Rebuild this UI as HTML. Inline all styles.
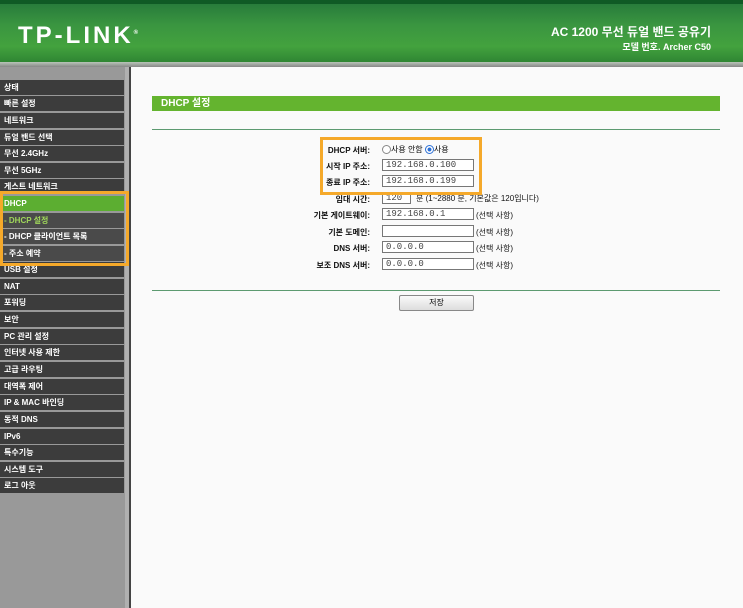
<!DOCTYPE html><html><head><meta charset="utf-8"><style>
*{margin:0;padding:0;box-sizing:border-box}
body{width:743px;height:608px;overflow:hidden;background:#fafafa;font-family:"Liberation Sans","Noto Sans CJK KR",sans-serif;position:relative}
.hdr{position:absolute;left:0;top:0;width:743px;height:62px;background:linear-gradient(180deg,#24773a 0%,#3a9540 40%,#43a23e 75%,#2f8633 100%)}
.hdr:after{content:"";position:absolute;left:0;top:0;width:743px;height:4px;background:#0f5a25}
.logo{position:absolute;left:18px;top:22px;color:#fff;font-size:24px;font-weight:bold;letter-spacing:3px}
.t1{position:absolute;right:32px;top:23px;color:#fff;font-size:12px;font-weight:bold}
.t2{position:absolute;right:32px;top:40px;color:#fff;font-size:9px;font-weight:bold}
.gl{position:absolute;left:0;top:62px;width:743px;height:5px;background:linear-gradient(#b8c4b8,#888)}
.side{position:absolute;left:0;top:67px;width:129px;height:541px;background:#999}
.side .strip{position:absolute;right:0;top:0;width:4px;height:541px;background:#b0b0b0}
.vl{position:absolute;left:129px;top:67px;width:2px;height:541px;background:#444}
.it{position:absolute;left:0;width:124px;height:15px;background:#3c3c3c;color:#fff;font-size:8px;font-weight:bold;line-height:15px;padding-left:4px}
.it.g{background:#5cae31}
.it.s{background:#4a4a4a}
.ob{position:absolute;border:3px solid #f5a92a}
.bar{position:absolute;left:152px;top:96px;width:568px;height:15px;background:#64b42f;color:#fff;font-size:10px;font-weight:bold;line-height:15px;padding-left:9px}
.ln{position:absolute;left:152px;width:568px;height:1px;background:#5c9a70}
.lb{position:absolute;right:373px;font-size:8px;font-weight:bold;color:#111;text-align:right}
.in{position:absolute;left:382px;width:92px;height:12px;border:1px solid #777;background:#fff;font-family:"Liberation Mono",monospace;font-size:9px;color:#444;line-height:10px;padding-left:3px}
.nt{position:absolute;left:476px;font-size:8px;color:#111}
.btn{position:absolute;left:399px;top:295px;width:75px;height:16px;border:1px solid #888;background:linear-gradient(#fafafa,#ddd);font-size:8px;text-align:center;line-height:14px;border-radius:2px}
</style></head><body>
<div class="hdr"><div class="logo">TP-LINK<sup style="font-size:6px;letter-spacing:0">®</sup></div><div class="t1">AC 1200 무선 듀얼 밴드 공유기</div><div class="t2">모델 번호. Archer C50</div></div>
<div class="gl"></div>
<div class="side"><div class="strip"></div></div>
<div class="vl"></div>
<div class="it" style="top:80px">상태</div>
<div class="it" style="top:96px">빠른 설정</div>
<div class="it" style="top:113px">네트워크</div>
<div class="it" style="top:130px">듀얼 밴드 선택</div>
<div class="it" style="top:146px">무선 2.4GHz</div>
<div class="it" style="top:163px">무선 5GHz</div>
<div class="it" style="top:179px">게스트 네트워크</div>
<div class="it g" style="top:196px">DHCP</div>
<div class="it s" style="top:213px;color:#9fd65a">- DHCP 설정</div>
<div class="it s" style="top:229px">- DHCP 클라이언트 목록</div>
<div class="it s" style="top:246px">- 주소 예약</div>
<div class="it" style="top:262px">USB 설정</div>
<div class="it" style="top:279px">NAT</div>
<div class="it" style="top:295px">포워딩</div>
<div class="it" style="top:312px">보안</div>
<div class="it" style="top:329px">PC 관리 설정</div>
<div class="it" style="top:345px">인터넷 사용 제한</div>
<div class="it" style="top:362px">고급 라우팅</div>
<div class="it" style="top:379px">대역폭 제어</div>
<div class="it" style="top:395px">IP &amp; MAC 바인딩</div>
<div class="it" style="top:412px">동적 DNS</div>
<div class="it" style="top:429px">IPv6</div>
<div class="it" style="top:445px">특수기능</div>
<div class="it" style="top:462px">시스템 도구</div>
<div class="it" style="top:478px">로그 아웃</div>
<div class="ob" style="left:0;top:191px;width:129px;height:75px"></div>
<div class="bar">DHCP 설정</div>
<div class="ln" style="top:129px"></div>
<div class="lb" style="top:145px">DHCP 서버:</div>
<div style="position:absolute;left:382px;top:144px;font-size:8px"><span style="display:inline-block;width:9px;height:9px;border:1px solid #888;border-radius:50%;vertical-align:-2px;background:#fff"></span>사용 안함 <span style="display:inline-block;width:9px;height:9px;border:1px solid #2a6fd6;border-radius:50%;vertical-align:-2px;background:radial-gradient(#2a6fd6 35%,#fff 45%)"></span>사용</div>
<div class="lb" style="top:161px">시작 IP 주소:</div><div class="in" style="top:159px">192.168.0.100</div>
<div class="lb" style="top:177px">종료 IP 주소:</div><div class="in" style="top:175px">192.168.0.199</div>
<div class="lb" style="top:194px">임대 시간:</div><div class="in" style="top:192px;width:29px">120</div><div class="nt" style="top:193px;left:416px">분 (1~2880 분, 기본값은 120입니다)</div>
<div class="lb" style="top:210px">기본 게이트웨이:</div><div class="in" style="top:208px">192.168.0.1</div><div class="nt" style="top:210px">(선택 사항)</div>
<div class="lb" style="top:227px">기본 도메인:</div><div class="in" style="top:225px"></div><div class="nt" style="top:227px">(선택 사항)</div>
<div class="lb" style="top:243px">DNS 서버:</div><div class="in" style="top:241px">0.0.0.0</div><div class="nt" style="top:243px">(선택 사항)</div>
<div class="lb" style="top:260px">보조 DNS 서버:</div><div class="in" style="top:258px">0.0.0.0</div><div class="nt" style="top:260px">(선택 사항)</div>
<div class="ob" style="left:320px;top:137px;width:162px;height:58px"></div>
<div class="ln" style="top:290px"></div>
<div class="btn">저장</div>
</body></html>
